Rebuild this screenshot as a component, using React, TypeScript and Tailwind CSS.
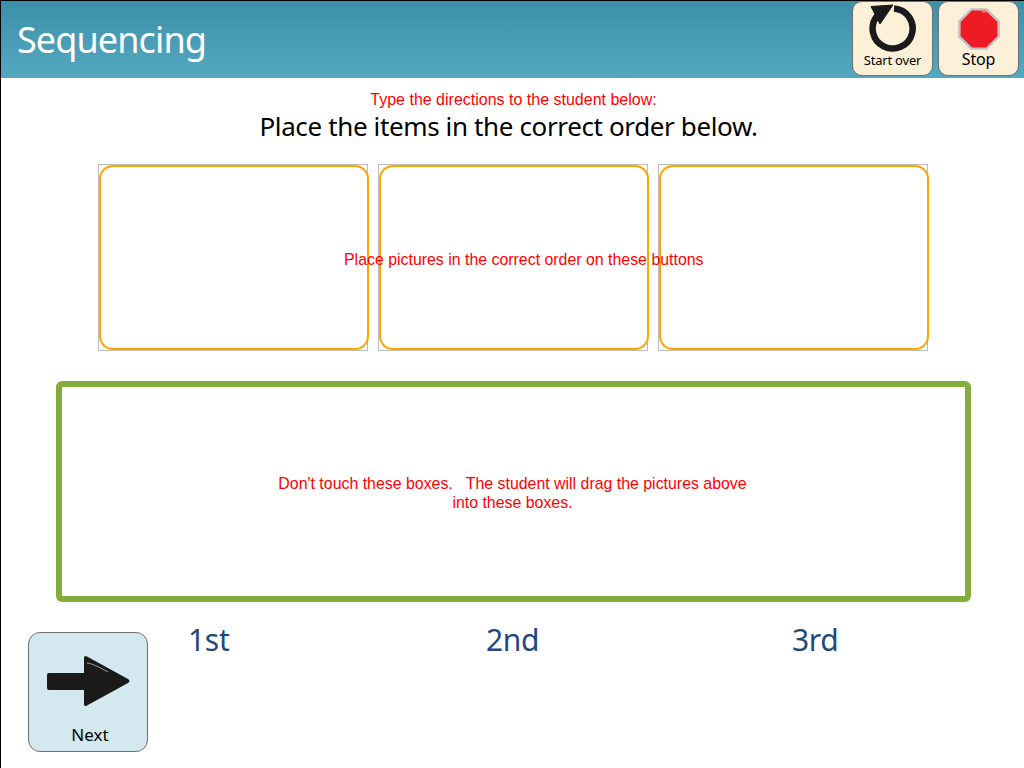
const tahoma = "font-['Noto_Sans',sans-serif]";
const arial = "font-['Liberation_Sans',sans-serif]";

function StartOverIcon() {
  return (
    <svg viewBox="0 0 60 52" className="mr-[3px] h-[52px] w-[60px]">
      <path d="M33 8.5A20 20 0 1 1 16 16" fill="none" stroke="#1a1a1a" strokeWidth="6.5" />
      <path d="M10 6.5L32 5L19 24Z" fill="#1a1a1a" stroke="#1a1a1a" strokeWidth="1" strokeLinejoin="round" />
    </svg>
  );
}

function StopIcon() {
  return (
    <svg viewBox="0 0 46 46" className="mb-[1px] h-[44px] w-[44px]">
      <polygon points="15,2.5 31,2.5 43.5,15 43.5,31 31,43.5 15,43.5 2.5,31 2.5,15" fill="#ed1c24" stroke="#c4c4c4" strokeWidth="2.5" />
      <path d="M26 5L32 5L38 11" fill="none" stroke="#f6b5b5" strokeWidth="1" />
    </svg>
  );
}

function NextArrow() {
  return (
    <svg viewBox="0 0 84 52" className="mr-[1px] h-[52px] w-[84px]">
      <path d="M3 18H38V3Q38 0 41 1.5L82 24Q85 26 82 28L41 50.5Q38 52 38 49V35H3Q1 35 1 33V20Q1 18 3 18Z" fill="#1a1a1a" />
      <path d="M41 8Q46 8 62 17" fill="none" stroke="#9a9a9a" strokeWidth="1" />
    </svg>
  );
}

function HeaderButton({ label, textClass, children }: { label: string; textClass: string; children: React.ReactNode }) {
  return (
    <button className="flex h-[75px] w-[81px] flex-col items-center rounded-[10px] border border-[#6f6f6f] bg-[#fdf0d8] text-black">
      <div className="flex h-[50px] items-end justify-center">{children}</div>
      <span className={`${tahoma} ${textClass} leading-none`}>{label}</span>
    </button>
  );
}

function Slot() {
  return (
    <div className="h-[187px] w-[270px] border border-[#bdbdbd]">
      <div className="h-[185px] w-[270px] rounded-[14px] border-2 border-[#ffa500]" />
    </div>
  );
}

export default function App() {
  return (
    <div className="relative h-[768px] w-[1024px] overflow-hidden border-l border-black bg-white">
      <header className="flex h-[78px] items-start justify-between border-t border-black bg-gradient-to-b from-[#3c8fa8] to-[#54a9c1] pl-[16px] pr-[5px]">
        <h1 className={`${tahoma} mt-[15px] text-[36px] leading-[48px] tracking-[-0.9px] text-white`}>Sequencing</h1>
        <div className="flex gap-[5px]">
          <HeaderButton label="Start over" textClass="mt-[2px] text-[13px] tracking-[-0.2px]"><StartOverIcon /></HeaderButton>
          <HeaderButton label="Stop" textClass="mt-[-1px] text-[16px] tracking-[-0.2px]"><StopIcon /></HeaderButton>
        </div>
      </header>

      <div className="px-[4px] pt-[13px] text-center">
        <p className={`${arial} pl-[2px] text-[16px] leading-[18px] text-[#ff0000]`}>Type the directions to the student below:</p>
        <p className={`${tahoma} pr-[8px] text-[26px] leading-[35px] tracking-[-0.37px] text-black`}>Place the items in the correct order below.</p>
      </div>

      <div className="relative mt-[20px] flex gap-[10px] pl-[97px]">
        <Slot />
        <Slot />
        <Slot />
        <span className={`${arial} absolute left-[343px] top-[87px] text-[15.9px] leading-[18px] text-[#ff0000]`}>Place pictures in the correct order on these buttons</span>
      </div>

      <div className={`${arial} ml-[55px] mt-[30px] flex h-[221px] w-[915px] items-center justify-center rounded-[6px] border-[6px] border-[#84ad3b] pr-[2px] pt-[2px] text-center text-[15.9px] leading-[19px] text-[#ff0000]`}>
        <p className="w-[480px] whitespace-pre-wrap">{"Don't touch these boxes.   The student will drag the pictures above into these boxes."}</p>
      </div>

      <div className="flex items-start pl-[27px] pt-[18px]">
        <button className="mt-[12px] flex h-[120px] w-[120px] flex-col items-center rounded-[12px] border border-[#6f6f6f] bg-[#d4e8ef] pt-[22px] text-black">
          <NextArrow />
          <span className={`${tahoma} ml-[4px] mt-[17px] text-[17px] leading-[22px]`}>Next</span>
        </button>
        <div className={`${tahoma} flex text-[30px] leading-[40px] tracking-[-0.3px] text-[#1f497d]`}>
          <span className="ml-[40px] w-[298px]">1st</span>
          <span className="w-[306px]">2nd</span>
          <span>3rd</span>
        </div>
      </div>
    </div>
  );
}
